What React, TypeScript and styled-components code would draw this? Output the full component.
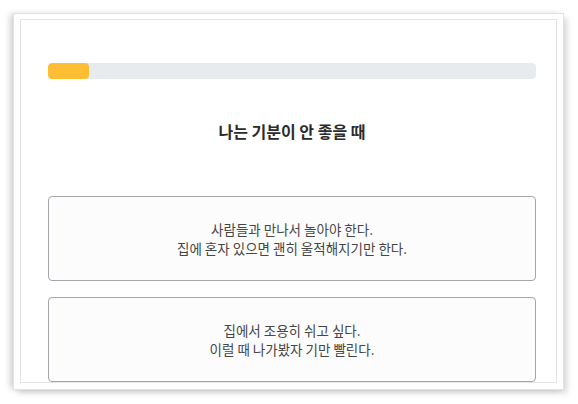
import React from 'react';
import styled, { createGlobalStyle } from 'styled-components';

const GlobalStyle = createGlobalStyle`
  html, body {
    margin: 0;
    padding: 0;
    background: #ffffff;
  }
  body {
    font-family: "Noto Sans CJK KR", "Noto Sans", sans-serif;
    color: #333;
  }
`;

interface Choice {
  lines: string[];
}

const choices: Choice[] = [
  { lines: ['사람들과 만나서 놀아야 한다.', '집에 혼자 있으면 괜히 울적해지기만 한다.'] },
  { lines: ['집에서 조용히 쉬고 싶다.', '이럴 때 나가봤자 기만 빨린다.'] },
];

const App: React.FunctionComponent = () => {
  const progress = 8.4;

  return (
    <Page>
      <GlobalStyle />
      <Frame>
        <Screen>
          <Track>
            <Fill style={{ width: `${progress}%` }} />
          </Track>
          <Question>나는 기분이 안 좋을 때</Question>
          <Options>
            {choices.map((c, i) => (
              <Option key={i} type="button">
                {c.lines.map((l, j) => (
                  <Line key={j}>{l}</Line>
                ))}
              </Option>
            ))}
          </Options>
        </Screen>
      </Frame>
    </Page>
  );
};

const Page = styled.div`
  width: 578px;
  height: 404px;
  padding: 13px 0 0 13px;
  box-sizing: border-box;
`;

const Frame = styled.div`
  width: 551px;
  height: 377px;
  box-sizing: border-box;
  padding: 5px 6px 6px 6px;
  border: 1px solid #e2e2e2;
  background: #fff;
  box-shadow: -4px 0 6px -1px rgba(0, 0, 0, 0.18), 4px 4px 6px -1px rgba(0, 0, 0, 0.16);
`;

const Screen = styled.div`
  height: 100%;
  box-sizing: border-box;
  border: 1px solid #e4e4e4;
  overflow: hidden;
  padding: 43px 20px 0 27px;
  display: flex;
  flex-direction: column;
`;

const Track = styled.div`
  height: 16px;
  border-radius: 4px;
  background: #e8ebee;
  overflow: hidden;
  flex-shrink: 0;
`;

const Fill = styled.div`
  height: 100%;
  background: #fdbe33;
  border-radius: 4px;
`;

const Question = styled.h2`
  margin: 42px 0 0;
  font-size: 16px;
  line-height: 21px;
  font-weight: 700;
  color: #2b2b2b;
  text-align: center;
`;

const Options = styled.div`
  margin-top: 54px;
  display: flex;
  flex-direction: column;
  gap: 16px;
`;

const Option = styled.button`
  height: 85px;
  flex-shrink: 0;
  box-sizing: border-box;
  border: 1px solid #a3a7ab;
  border-radius: 4px;
  background: #fcfcfc;
  display: flex;
  flex-direction: column;
  align-items: center;
  justify-content: center;
  gap: 0;
  font-family: "Noto Sans CJK KR", "Noto Sans", sans-serif;
  font-size: 13.5px;
  color: #464646;
  padding: 0;
  cursor: pointer;
`;

const Line = styled.span`
  display: block;
  line-height: 19px;
  white-space: nowrap;
`;

export default App;
